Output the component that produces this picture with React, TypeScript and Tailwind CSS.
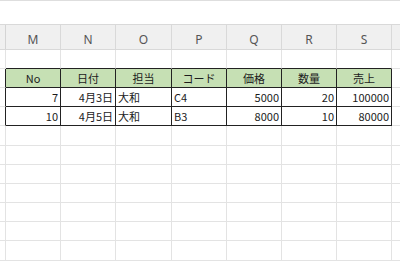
import React from "react";

const COLS = ["M", "N", "O", "P", "Q", "R", "S"];
const COL_W = ["w-[55px]", "w-[55px]", "w-[56px]", "w-[55px]", "w-[55px]", "w-[55px]", "w-[55px]"];

type Cell = { t: string; a: "l" | "r" | "c" };

const HEAD: Cell[] = ["No", "日付", "担当", "コード", "価格", "数量", "売上"].map((t) => ({ t, a: "c" }));
const DATA: Cell[][] = [
  [
    { t: "7", a: "r" },
    { t: "4月3日", a: "r" },
    { t: "大和", a: "l" },
    { t: "C4", a: "l" },
    { t: "5000", a: "r" },
    { t: "20", a: "r" },
    { t: "100000", a: "r" },
  ],
  [
    { t: "10", a: "r" },
    { t: "4月5日", a: "r" },
    { t: "大和", a: "l" },
    { t: "B3", a: "l" },
    { t: "8000", a: "r" },
    { t: "10", a: "r" },
    { t: "80000", a: "r" },
  ],
];

// row heights after the column-letter header (gridline included)
const ROW_TALL = [false, false, false, false, true, false, false, false, false, false, true];

const font = { fontFamily: '"Noto Sans CJK JP", "Noto Sans", sans-serif' };

function SheetRow({ index }: { index: number }) {
  const tall = ROW_TALL[index];
  const inTable = index >= 1 && index <= 3;
  const isHead = index === 1;
  const aboveTable = index === 0;
  const cells: Cell[] | null = isHead ? HEAD : index === 2 ? DATA[0] : index === 3 ? DATA[1] : null;

  return (
    <div className={`flex ${tall ? "h-[20px]" : "h-[19px]"}`}>
      <div
        className={`w-[6px] shrink-0 border-b border-r border-b-[#e3e3e3] ${
          inTable ? "border-r-[#222222]" : "border-r-[#e3e3e3]"
        }`}
      />
      {COLS.map((c, i) => {
        const cell = cells ? cells[i] : null;
        const align =
          cell?.a === "r" ? "justify-end pr-[2px]" : cell?.a === "l" ? "justify-start pl-[2px]" : "justify-center";
        return (
          <div
            key={c}
            className={`${COL_W[i]} shrink-0 flex items-center border-b border-r text-[11px] leading-none text-[#1c1c1c] ${align} ${
              inTable
                ? "border-b-[#222222] border-r-[#222222]"
                : aboveTable
                ? "border-b-[#222222] border-r-[#e3e3e3]"
                : "border-b-[#e3e3e3] border-r-[#e3e3e3]"
            } ${isHead ? "bg-[#c6e0b4]" : "bg-white"}`}
          >
            {cell ? <span className="whitespace-nowrap">{cell.t}</span> : null}
          </div>
        );
      })}
      <div className="flex-1 border-b border-b-[#e3e3e3]" />
    </div>
  );
}

export default function App() {
  return (
    <div className="w-[400px] h-[266px] overflow-hidden bg-white flex flex-col" style={font}>
      {/* formula bar strip */}
      <div className="h-[24px] shrink-0 border-t border-[#dedede] bg-white" />
      {/* column letters */}
      <div className="h-[26px] shrink-0 flex bg-[#f0f0f0] border-t border-b border-[#d9d9d9]">
        <div className="w-[6px] shrink-0 border-r border-[#d4d4d4]" />
        {COLS.map((c, i) => (
          <div
            key={c}
            className={`${COL_W[i]} shrink-0 flex items-center justify-center pt-[5px] border-r border-[#d9d9d9] text-[12px] text-[#555555]`}
            style={{ fontFamily: '"Noto Sans", sans-serif' }}
          >
            {c}
          </div>
        ))}
        <div className="flex-1" />
      </div>
      {ROW_TALL.map((_, i) => (
        <SheetRow key={i} index={i} />
      ))}
    </div>
  );
}
